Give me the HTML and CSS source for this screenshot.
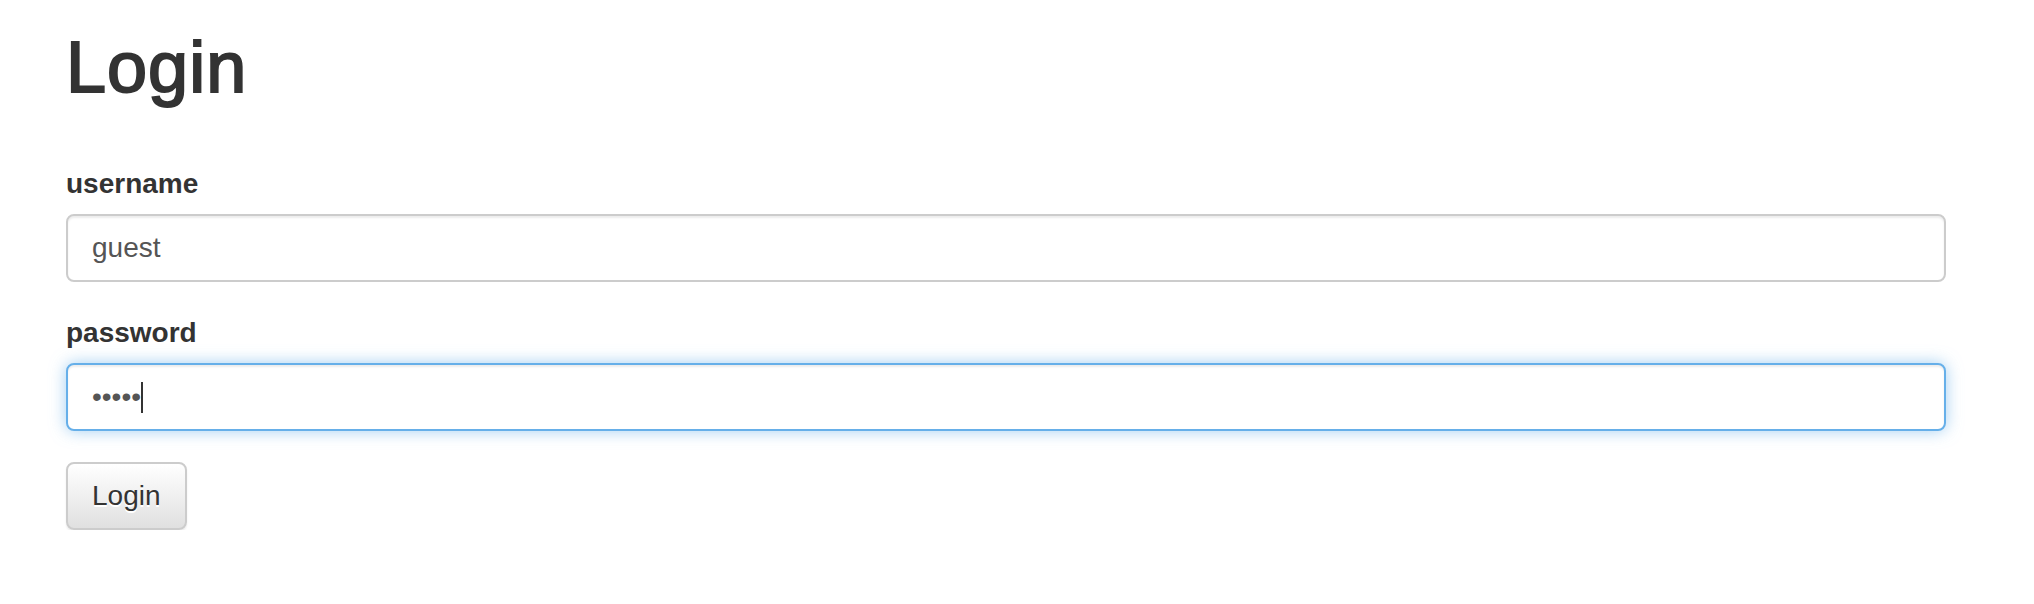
FILE: index.html
```html
<!DOCTYPE html>
<html lang="en">
<head>
<meta charset="utf-8">
<title>Login</title>
<link rel="stylesheet" href="styles.css">
</head>
<body>
<div class="container">
  <h1 class="title">Login</h1>
  <form class="login-form">
    <div class="form-group">
      <label class="label" for="username">username</label>
      <input class="form-control" id="username" type="text" value="guest">
    </div>
    <div class="form-group">
      <label class="label" for="password">password</label>
      <div class="form-control focused" id="password"><span class="dots">•••••</span><span class="caret"></span></div>
    </div>
    <button class="btn" type="button">Login</button>
  </form>
</div>
</body>
</html>
```

FILE: styles.css
```css
html, body {
  margin: 0;
  padding: 0;
  background: #fff;
}
body {
  font-family: "Liberation Sans", Arial, sans-serif;
  font-size: 28px;
  color: #333;
}
.container {
  width: 1880px;
  margin-left: 66px;
}
.title {
  margin: 27px 0 57px;
  font-size: 72px;
  line-height: 80px;
  font-weight: 400;
  letter-spacing: 1px;
  color: #333;
  -webkit-text-stroke: 2px #333;
}
.login-form {
  margin: 0;
}
.form-group {
  margin-bottom: 31px;
}
.label {
  display: block;
  margin-bottom: 10px;
  font-weight: 700;
  font-size: 28px;
  line-height: 40px;
  color: #333;
}
.form-control {
  display: flex;
  align-items: center;
  box-sizing: border-box;
  width: 100%;
  height: 68px;
  padding: 12px 24px;
  font-family: "Liberation Sans", Arial, sans-serif;
  font-size: 28px;
  line-height: 40px;
  color: #555;
  background: #fff;
  border: 2px solid #ccc;
  border-radius: 8px;
  box-shadow: inset 0 2px 2px rgba(0,0,0,.075);
  outline: none;
  margin: 0;
}
.form-control.focused {
  border-color: #66afe9;
  box-shadow: inset 0 2px 2px rgba(0,0,0,.075), 0 0 16px rgba(102,175,233,.6);
}
.dots {
  color: #555;
}
.caret {
  display: inline-block;
  width: 2px;
  height: 31px;
  background: #333;
}
.btn {
  display: inline-block;
  box-sizing: border-box;
  height: 68px;
  padding: 12px 24px;
  font-family: "Liberation Sans", Arial, sans-serif;
  font-size: 28px;
  line-height: 40px;
  color: #333;
  text-shadow: 0 2px 0 #fff;
  background: linear-gradient(to bottom, #fff 0, #e0e0e0 100%);
  border: 2px solid #ccc;
  border-radius: 8px;
  box-shadow: inset 0 2px 0 rgba(255,255,255,.15), 0 2px 2px rgba(0,0,0,.075);
  margin: 0;
  cursor: pointer;
}
```
